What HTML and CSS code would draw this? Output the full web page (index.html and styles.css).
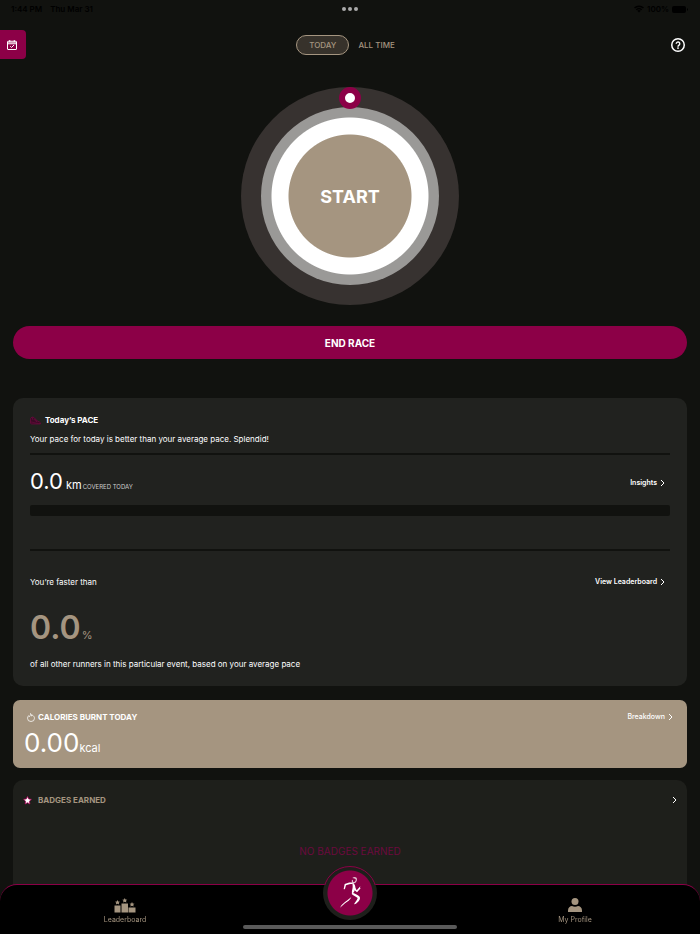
FILE: index.html
```html
<!DOCTYPE html>
<html lang="en">
<head>
    <meta charset="UTF-8">
    <meta name="viewport" content="width=device-width, initial-scale=1.0">
    <title>Race</title>
    <link rel="stylesheet" href="styles.css">
</head>
<body>
    <!-- Status Bar -->
    <div class="status-bar">
        <div class="status-left"><span>1:44 PM</span><span>Thu Mar 31</span></div>
        <div class="status-dots"><i></i><i></i><i></i></div>
        <div class="status-right">
            <svg width="10" height="8" viewBox="0 0 20 16"><path d="M1 6a13 13 0 0 1 18 0M4.500 9.500a8 8 0 0 1 11 0" fill="none" stroke="currentColor" stroke-width="3"/><path d="M6.500 11.500a5 5 0 0 1 7 0L10 15z" fill="currentColor"/></svg>
            <span>100%</span>
            <svg width="17" height="7" viewBox="0 0 17 7"><rect width="14" height="7" rx="2" fill="currentColor"/><path d="M15 2v3l1-1V3z" fill="currentColor"/></svg>
        </div>
    </div>

    <!-- Header -->
    <header class="header">
        <button class="calendar-btn" aria-label="Calendar">
            <svg width="10" height="10" viewBox="0 0 20 20" fill="none" stroke="#fff" stroke-width="2"><rect x="1" y="2.500" width="18" height="16.500" rx="1"/><path d="M1 7.500h18M5.500 0v4M14.500 0v4M6.500 12.500l2.500 2.500 5-5"/><path d="M2 5h16" stroke-opacity=".6"/></svg>
        </button>
        <nav class="toggle">
            <button class="toggle-btn active">TODAY</button>
            <button class="toggle-btn">ALL TIME</button>
        </nav>
        <button class="help-btn" aria-label="Help">
            <svg width="14" height="14" viewBox="0 0 28 28" fill="none" stroke="#fff"><circle cx="14" cy="14" r="12.500" stroke-width="3"/><path d="M10.500 11.500a3.500 3.500 0 1 1 5.500 2.800c-1.300.9-2 1.500-2 3" stroke-width="2.800"/><circle cx="14" cy="20.200" r="1.800" fill="#fff" stroke="none"/></svg>
        </button>
    </header>

    <!-- Main Content -->
    <main class="main-content">
        <div class="dial">
            <span class="dial-knob"></span>
            <button class="dial-start">START</button>
        </div>

        <button class="end-race">END RACE</button>

        <section class="card pace-card">
            <h2 class="pace-title">
                <svg width="11" height="9" viewBox="0 0 22 18" fill="#3a0a25" stroke="#6b0a3e" stroke-width="1.500"><path d="M1 14V5l3-3 4 1 5 6 6 3c2 1 2 2 2 4H3c-1 0-2-1-2-2z"/><path d="M1 12c5 0 9 3 20 3M8 8l3-2M10 10l3-2M12 12l2-2M4 2l2 6" fill="none"/></svg>
                Today’s PACE
            </h2>
            <p class="pace-text">Your pace for today is better than your average pace. Splendid!</p>
            <hr>
            <div class="row distance-row">
                <p class="distance"><span class="distance-value">0.0</span><span class="distance-unit">km</span><span class="distance-label">COVERED TODAY</span></p>
                <a class="link" href="#insights">Insights <svg class="chevron" viewBox="0 0 5 8"><path d="M1 1l3 3-3 3"/></svg></a>
            </div>
            <div class="distance-bar"></div>
            <hr>
            <div class="row faster-row">
                <p>You’re faster than</p>
                <a class="link" href="#leaderboard">View Leaderboard <svg class="chevron" viewBox="0 0 5 8"><path d="M1 1l3 3-3 3"/></svg></a>
            </div>
            <p class="percent"><span class="percent-value">0.0</span><span class="percent-unit">%</span></p>
            <p>of all other runners in this particular event, based on your average pace</p>
        </section>

        <section class="card calories-card">
            <div class="row">
                <h2 class="calories-title">
                    <svg width="8" height="9" viewBox="0 0 16 18" fill="none" stroke="#fff" stroke-width="1.500"><path d="M7 1c2 1.500 2 3 2 5 1 0 1.500-1 1.500-2 2.500 1.500 4.500 4 4.500 6.500a7 6.500 0 0 1-14 0C1 8 2.500 7 3 5.500c1 .5 1.500 1 2 2C6 5.500 7.500 4 7 1z"/></svg>
                    CALORIES BURNT TODAY
                </h2>
                <a class="link breakdown" href="#breakdown">Breakdown <svg class="chevron" viewBox="0 0 5 8"><path d="M1 1l3 3-3 3"/></svg></a>
            </div>
            <p class="calories"><span class="calories-value">0.00</span><span class="calories-unit">kcal</span></p>
        </section>

        <section class="card badges-card">
            <div class="row">
                <h2 class="badges-title">
                    <svg width="9" height="9" viewBox="0 0 18 18"><path d="M9 1l2.400 5 5.400.7-4 3.800 1 5.500L9 13.400 4.200 16l1-5.500-4-3.800L6.600 6z" fill="#fff" stroke="#b3005c" stroke-width="1.500"/></svg>
                    BADGES EARNED
                </h2>
                <a class="link" href="#badges" aria-label="Badges"><svg class="chevron" viewBox="0 0 5 8"><path d="M1 1l3 3-3 3"/></svg></a>
            </div>
            <p class="badges-empty">NO BADGES EARNED</p>
        </section>
    </main>

    <!-- Tab Bar -->
    <nav class="tab-bar">
        <a class="tab" href="#leaderboard">
            <svg width="22" height="15" viewBox="0 0 44 30" fill="#a59580"><path d="M1 15h12v14H1zM15 11h13v18H15zM29 19h14v10H29z"/><path id="star" d="M7 4l1.500 3 3.500.3-2.500 2.400.8 3.300L7 11.500 3.700 13l.8-3.300L2 7.300 5.500 7z"/><use href="#star" x="14.500" y="-4"/><use href="#star" x="29" y="4"/></svg>
            Leaderboard
        </a>
        <button class="run-btn" aria-label="Run">
            <svg width="44" height="44" viewBox="0 0 132 132" fill="#fff"><path d="M73 21c5-5 14-3 14 4 0 6-4 12-9 12-6 0-8-6-6-11l3 2c-1 4 1 6 4 5 3-1 5-5 4-8-2-3-6-3-10-4z" opacity=".75"/><path d="M74 35c-7-2-16 0-24 4l-3 15c1 2 3 1 4-1l3-10c7-3 13-4 20-4z"/><path d="M73 34c7 4 10 11 9 19l-4 10-6 6c-2-9 3-17 2-24z"/><path d="M81 49l5 9 11-12-1 5 2 1-11 12-9-8z"/><path d="M73 65c9 3 17 6 22 12 4 8-5 17-13 22l-4 1c3-7 9-12 11-19-5-5-14-7-18-12z"/><path d="M70 78c-3 9-12 14-19 19L36 110c5-10 14-16 22-22z"/></svg>
        </button>
        <a class="tab" href="#profile">
            <svg width="14" height="15" viewBox="0 0 28 30" fill="#a59580"><circle cx="14" cy="7" r="7"/><path d="M0 28v-3c0-6 4-9 8-9 3 2 9 2 12 0 4 0 8 3 8 9v3z"/></svg>
            My Profile
        </a>
        <span class="home-indicator"></span>
    </nav>
</body>
</html>
```
FILE: styles.css
```css
/* Basic Reset */
* {
    box-sizing: border-box;
}

body, h1, h2, p {
    margin: 0;
    padding: 0;
}

body {
    height: 100vh;
    overflow: hidden;
    background-color: #11120f;
    color: #fff;
    font-family: Inter, 'Liberation Sans', sans-serif;
    font-size: 8px;
    line-height: 12px;
}

button {
    border: none;
    padding: 0;
    font-family: inherit;
    color: inherit;
    cursor: pointer;
}

a {
    color: inherit;
    text-decoration: none;
}

svg {
    display: block;
    flex-shrink: 0;
}

/* Status Bar */
.status-bar {
    display: grid;
    grid-template-columns: 1fr auto 1fr;
    align-items: center;
    height: 18px;
    padding: 0 11px;
    color: #000;
    font-weight: 600;
}

.status-left {
    display: flex;
    gap: 8px;
}

.status-right {
    display: flex;
    justify-content: flex-end;
    align-items: center;
    gap: 3px;
}

.status-dots {
    display: flex;
    gap: 2px;
}

.status-dots i {
    width: 4px;
    height: 4px;
    border-radius: 50%;
    background-color: #aaa;
}

/* Header */
.header {
    display: grid;
    grid-template-columns: 1fr auto 1fr;
    align-items: center;
    margin-top: 12px;
    padding-right: 15px;
}

.calendar-btn {
    display: flex;
    align-items: center;
    width: 26px;
    height: 29px;
    padding-left: 7px;
    border-radius: 0 4px 4px 0;
    background-color: #8c0047;
}

.toggle {
    display: flex;
    align-items: center;
    gap: 9px;
    padding-left: 6px;
}

.toggle-btn {
    height: 20px;
    background: none;
    color: #a59580;
    font-size: 8px;
    font-weight: 500;
}

.toggle-btn.active {
    padding: 0 12px;
    border: 1px solid #a59580;
    border-radius: 10px;
    background-color: #37322b;
}

.help-btn {
    justify-self: end;
    background: none;
}

/* Main Content */
.main-content {
    display: flex;
    flex-direction: column;
    padding: 28px 13px 0;
}

.dial {
    position: relative;
    display: flex;
    align-items: center;
    justify-content: center;
    align-self: center;
    width: 218px;
    height: 218px;
    border-radius: 50%;
    background-color: #373230;
}

.dial-start {
    width: 178px;
    height: 178px;
    border-radius: 50%;
    background: radial-gradient(circle, #a59580 61px, #fff 62px, #fff 78px, #9a9997 79px);
    font-size: 18px;
    font-weight: 700;
}

.dial-knob {
    position: absolute;
    top: 0;
    left: 50%;
    width: 22px;
    height: 22px;
    transform: translateX(-50%);
    border: 6px solid #8c0047;
    border-radius: 50%;
    background-color: #fff;
}

.end-race {
    height: 33px;
    margin-top: 21px;
    border-radius: 17px;
    background-color: #8c0047;
    font-size: 10px;
    font-weight: 700;
}

.card {
    border-radius: 10px;
    background-color: #21221f;
}

.card h2 {
    display: flex;
    align-items: center;
    font-size: 8px;
    line-height: 12px;
    font-weight: 700;
}

.row {
    display: flex;
    align-items: center;
    justify-content: space-between;
}

.link {
    display: flex;
    align-items: center;
    gap: 3px;
    font-size: 7px;
    font-weight: 600;
}

.chevron {
    width: 5px;
    height: 8px;
    fill: none;
    stroke: currentColor;
}

hr {
    height: 2px;
    margin: 0;
    border: none;
    background-color: #11120f;
}

/* Pace Card */
.pace-card {
    margin-top: 39px;
    padding: 16px 17px;
}

.pace-title {
    gap: 4px;
}

.pace-text {
    margin: 7px 0 8px;
}

.distance-row {
    height: 50px;
    padding: 6px 5px 0 0;
}

.distance {
    display: flex;
    align-items: baseline;
    line-height: 28px;
}

.distance-value {
    margin-right: 3px;
    font-size: 22px;
    line-height: 32px;
}

.distance-unit {
    font-size: 11px;
}

.distance-label {
    margin-left: 1px;
    color: #ccc;
    font-size: 6px;
}

.distance-bar {
    height: 11px;
    margin-bottom: 33px;
    border-radius: 2px;
    background-color: #11120f;
}

.faster-row {
    margin-top: 25px;
    padding-right: 5px;
}

.percent {
    display: flex;
    align-items: baseline;
    margin: 20px 0 10px;
    line-height: 40px;
    color: #a59580;
}

.percent-value {
    font-size: 32px;
    font-weight: 600;
}

.percent-unit {
    margin-left: 1px;
    font-size: 11px;
    line-height: 12px;
}

/* Calories Card */
.calories-card {
    margin-top: 14px;
    padding: 11px 14px 8px;
    border-radius: 7px;
    background-color: #a59580;
}

.calories-title {
    gap: 3px;
}

.breakdown {
    font-weight: 500;
}

.calories {
    display: flex;
    align-items: baseline;
    margin: 3px 0 0 -3px;
    line-height: 34px;
}

.calories-value {
    font-size: 26px;
}

.calories-unit {
    font-size: 11px;
    line-height: 12px;
}

/* Badges Card */
.badges-card {
    height: 180px;
    margin-top: 12px;
    padding: 14px 10px;
    background-color: #1e1f1b;
}

.badges-title {
    gap: 6px;
    color: #a59580;
}

.badges-empty {
    margin-top: 39px;
    color: #6b0a3e;
    font-size: 10px;
    text-align: center;
}

/* Tab Bar */
.tab-bar {
    position: fixed;
    left: 0;
    right: 0;
    bottom: 0;
    display: grid;
    grid-template-columns: 250px 1fr 250px;
    height: 50px;
    border-top: 1px solid #8c0047;
    border-radius: 17px 17px 0 0;
    background-color: #000;
}

.tab {
    display: flex;
    flex-direction: column;
    align-items: center;
    gap: 1px;
    padding-top: 13px;
    color: #a59580;
    font-size: 7px;
}

.run-btn {
    position: relative;
    justify-self: center;
    width: 54px;
    height: 54px;
    margin-top: -19px;
    padding: 5px;
    border-radius: 50%;
    background: radial-gradient(circle, #8c0047 22px, #1e1f1b 23px);
}

/* upper part of the ring, continues the bar's border */
.run-btn::before {
    content: '';
    position: absolute;
    inset: 0;
    border: 1px solid #8c0047;
    border-radius: 50%;
    clip-path: inset(0 0 35px 0);
}

.home-indicator {
    position: absolute;
    bottom: 5px;
    left: 50%;
    width: 214px;
    height: 4px;
    transform: translateX(-50%);
    border-radius: 2px;
    background-color: #5a5a5a;
}
```
